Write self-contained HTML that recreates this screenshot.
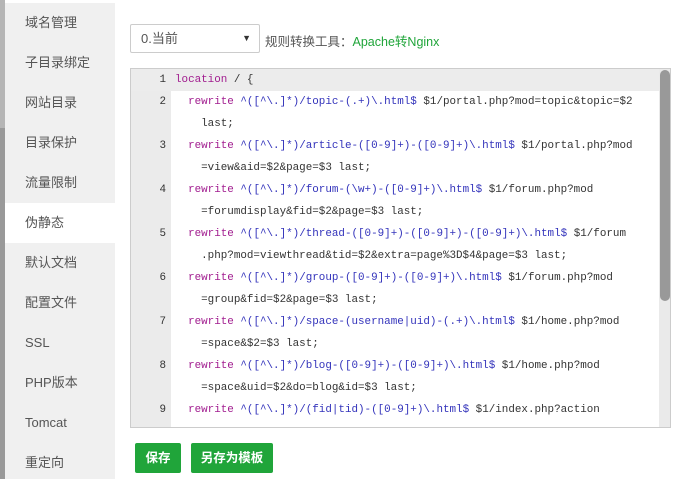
<!DOCTYPE html>
<html><head><meta charset="utf-8"><style>
*{margin:0;padding:0;box-sizing:border-box}
body{width:697px;height:479px;overflow:hidden;background:#fff;font-family:"Liberation Sans","Noto Sans CJK SC",sans-serif;position:relative}
.strip{position:absolute;left:0;top:0;width:5px;height:479px;background:#999}
.strip .a{position:absolute;top:0;height:128px;width:5px;background:#b5b5b5}
.side{position:absolute;left:5px;top:3px;width:110px;height:476px;background:#f0f0f0}
.side div{height:40px;line-height:40px;padding-left:20px;font-size:13px;color:#555}
.side .on{background:#fff}
.sel{position:absolute;left:130px;top:24px;width:130px;height:29px;border:1px solid #ccc;border-radius:2px;font-size:13px;color:#555;line-height:27px;padding-left:10px}
.sel span{position:absolute;right:8px;top:0;font-size:9px;color:#333}
.tool{position:absolute;left:265px;top:31px;font-size:12.5px;color:#555}
.tool b{font-weight:normal;color:#20a53a}
.ed{position:absolute;left:130px;top:68px;width:541px;height:360px;border:1px solid #ccc;overflow:hidden;background:#fff}
.gut{position:absolute;left:0;top:0;width:40px;height:100%;background:#ebebeb}
.hl{position:absolute;left:0;top:0;width:528px;height:22px;background:#ececec}
.sb{position:absolute;left:529px;top:1px;width:10px;height:231px;background:#999;border-radius:5px}
.sbt{position:absolute;left:528px;top:0;width:12px;height:100%;background:#eaeaea}
.r{position:absolute;left:0;height:22px;line-height:22px;font-family:"Liberation Mono",monospace;font-size:10.9px;color:#333;white-space:pre}
.n{position:absolute;left:0;width:35px;text-align:right;color:#333}
.t{position:absolute;left:44px}
.k{color:#a11c8f}.b{color:#3333bb}
.btn{position:absolute;top:443px;height:30px;line-height:30px;background:#20a53a;color:#fff;font-size:12.5px;border-radius:2px;text-align:center;font-weight:bold}
</style></head><body>
<div class="strip"><div class="a"></div></div>
<div class="side">
<div>域名管理</div><div>子目录绑定</div><div>网站目录</div><div>目录保护</div><div>流量限制</div><div class="on">伪静态</div><div>默认文档</div><div>配置文件</div><div>SSL</div><div>PHP版本</div><div>Tomcat</div><div>重定向</div>
</div>
<div class="sel">0.当前<span>▼</span></div>
<div class="tool">规则转换工具：<b>Apache转Nginx</b></div>
<div class="ed">
<div class="gut"></div><div class="sbt"></div><div class="hl"></div><div class="sb"></div>
<div class="r" style="top:0"><span class="n">1</span><span class="t"><span class="k">location</span> / {</span></div>
<div class="r" style="top:22px"><span class="n">2</span><span class="t">  <span class="k">rewrite</span> <span class="b">^([^\.]*)/topic-(.+)\.html$</span> $1/portal.php?mod=topic&amp;topic=$2</span></div>
<div class="r" style="top:44px"><span class="t">    last;</span></div>
<div class="r" style="top:66px"><span class="n">3</span><span class="t">  <span class="k">rewrite</span> <span class="b">^([^\.]*)/article-([0-9]+)-([0-9]+)\.html$</span> $1/portal.php?mod</span></div>
<div class="r" style="top:88px"><span class="t">    =view&amp;aid=$2&amp;page=$3 last;</span></div>
<div class="r" style="top:110px"><span class="n">4</span><span class="t">  <span class="k">rewrite</span> <span class="b">^([^\.]*)/forum-(\w+)-([0-9]+)\.html$</span> $1/forum.php?mod</span></div>
<div class="r" style="top:132px"><span class="t">    =forumdisplay&amp;fid=$2&amp;page=$3 last;</span></div>
<div class="r" style="top:154px"><span class="n">5</span><span class="t">  <span class="k">rewrite</span> <span class="b">^([^\.]*)/thread-([0-9]+)-([0-9]+)-([0-9]+)\.html$</span> $1/forum</span></div>
<div class="r" style="top:176px"><span class="t">    .php?mod=viewthread&amp;tid=$2&amp;extra=page%3D$4&amp;page=$3 last;</span></div>
<div class="r" style="top:198px"><span class="n">6</span><span class="t">  <span class="k">rewrite</span> <span class="b">^([^\.]*)/group-([0-9]+)-([0-9]+)\.html$</span> $1/forum.php?mod</span></div>
<div class="r" style="top:220px"><span class="t">    =group&amp;fid=$2&amp;page=$3 last;</span></div>
<div class="r" style="top:242px"><span class="n">7</span><span class="t">  <span class="k">rewrite</span> <span class="b">^([^\.]*)/space-(username|uid)-(.+)\.html$</span> $1/home.php?mod</span></div>
<div class="r" style="top:264px"><span class="t">    =space&amp;$2=$3 last;</span></div>
<div class="r" style="top:286px"><span class="n">8</span><span class="t">  <span class="k">rewrite</span> <span class="b">^([^\.]*)/blog-([0-9]+)-([0-9]+)\.html$</span> $1/home.php?mod</span></div>
<div class="r" style="top:308px"><span class="t">    =space&amp;uid=$2&amp;do=blog&amp;id=$3 last;</span></div>
<div class="r" style="top:330px"><span class="n">9</span><span class="t">  <span class="k">rewrite</span> <span class="b">^([^\.]*)/(fid|tid)-([0-9]+)\.html$</span> $1/index.php?action</span></div>
</div>
<div class="btn" style="left:135px;width:46px">保存</div>
<div class="btn" style="left:191px;width:82px">另存为模板</div>
</body></html>
